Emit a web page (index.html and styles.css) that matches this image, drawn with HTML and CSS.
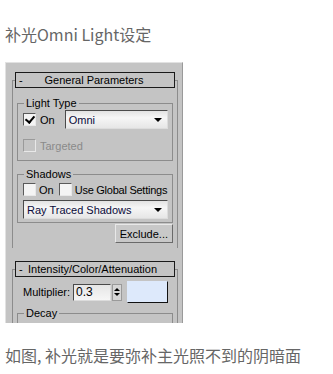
FILE: index.html
```html
<!DOCTYPE html>
<html lang="zh">
<head>
  <meta charset="UTF-8">
  <title>补光Omni Light设定</title>
  <link rel="stylesheet" href="styles.css">
</head>
<body>

  <p class="caption">补光Omni Light设定</p>

  <div class="panel">
    <div class="rollout">
      <div class="rollout-head"><span class="minus">-</span><span class="head-title">General Parameters</span></div>

      <fieldset class="group">
        <legend>Light Type</legend>
        <div class="row">
          <span class="check checked"></span>
          <span class="label">On</span>
          <div class="dropdown wide"><span>Omni</span><span class="arrow"></span></div>
        </div>
        <div class="row disabled">
          <span class="check"></span>
          <span class="label">Targeted</span>
        </div>
      </fieldset>

      <fieldset class="group shadows">
        <legend>Shadows</legend>
        <div class="row tight">
          <span class="check"></span>
          <span class="label">On</span>
          <span class="check"></span>
          <span class="label narrow">Use Global Settings</span>
        </div>
        <div class="dropdown full"><span>Ray Traced Shadows</span><span class="arrow"></span></div>
      </fieldset>

      <div class="btn-row">
        <button class="btn">Exclude...</button>
      </div>
    </div>

    <div class="rollout second">
      <div class="rollout-head left"><span class="minus">-</span><span>Intensity/Color/Attenuation</span></div>
      <div class="mult-row">
        <span class="label">Multiplier:</span>
        <div class="spinner-field">0.3</div>
        <div class="spinner"><span class="up"></span><span class="down"></span></div>
        <div class="swatch"></div>
      </div>
      <fieldset class="group decay">
        <legend>Decay</legend>
      </fieldset>
    </div>
  </div>

  <p class="caption bottom">如图, 补光就是要弥补主光照不到的阴暗面</p>

</body>
</html>
```

FILE: styles.css
```css
* {
  box-sizing: border-box;
  margin: 0;
  padding: 0;
}

body {
  background: #fff;
  font-family: "Noto Sans CJK SC", "Noto Sans", sans-serif;
}

.caption {
  margin: 23px 0 0 5px;
  font-size: 16px;
  line-height: 22px;
  color: #666;
}

.caption.bottom {
  margin-top: 21px;
}

/* 3ds max панель */
.panel {
  margin: 17px 0 0 5px;
  width: 178px;
  height: 261px;
  overflow: hidden;
  background: #c4c4c4;
  border-left: 1px solid #e2e2e2;
  border-top: 1px solid #e2e2e2;
  border-right: 1px solid #9a9a9a;
  padding-top: 1px;
  font-family: "Liberation Sans", Arial, sans-serif;
  font-size: 11px;
  color: #000;
}

.rollout {
  margin: 16px 4px 0 6px;
  border: 1px solid #8c8c8c;
  border-bottom: none;
  padding: 0 3px 5px 3px;
}

.rollout.second {
  margin-top: 21px;
  padding-bottom: 0;
  border-top: 1px solid #8c8c8c;
}

.rollout-head {
  display: flex;
  align-items: center;
  height: 16px;
  margin: -9px -1px 0 -1px;
  border: 1px solid #1a1a1a;
  background: #c4c4c4;
  line-height: 14px;
}

.rollout-head .minus {
  width: 10px;
  padding-left: 3px;
}

.rollout-head .head-title {
  flex: 1;
  text-align: center;
  padding-right: 12px;
}

.rollout-head.left span:last-child {
  padding-left: 2px;
}

.group {
  min-width: 0;
  border: 1px solid #8c8c8c;
  margin: 9px 1px 0 1px;
  padding: 0 4px 5px 5px;
}

.group.shadows {
  margin-top: 7px;
  padding-bottom: 3px;
}

.group legend {
  padding: 0 2px;
  margin-left: 1px;
  line-height: 12px;
}

.row {
  display: flex;
  align-items: center;
  gap: 4px;
  height: 19px;
  margin-top: 1px;
  white-space: nowrap;
}

.row + .row {
  margin-top: 7px;
}

.row.tight {
  gap: 3px;
  height: 17px;
}

.check {
  flex: none;
  width: 13px;
  height: 13px;
  background: #f4f4f4;
  border: 1px solid;
  border-color: #5a5a5a #e8e8e8 #e8e8e8 #5a5a5a;
  position: relative;
}

.check.checked::after {
  content: "";
  position: absolute;
  left: 3px;
  top: 0px;
  width: 4px;
  height: 7px;
  border: solid #000;
  border-width: 0 2px 2px 0;
  transform: rotate(40deg);
}

.label {
  margin-right: 4px;
}

.row.tight .label {
  margin-right: 2px;
}

.label.narrow {
  letter-spacing: -0.25px;
}

.disabled .check {
  background: #c4c4c4;
  border-color: #9a9a9a #e8e8e8 #e8e8e8 #9a9a9a;
}

.disabled .label {
  color: #8a8a8a;
}

.dropdown {
  display: flex;
  align-items: center;
  justify-content: space-between;
  height: 19px;
  padding: 0 5px 0 3px;
  background: linear-gradient(#e2e2e2, #f6f6f6 40%, #e6e6e6);
  border: 1px solid;
  border-color: #4a4a4a #dcdcdc #dcdcdc #4a4a4a;
  color: #0a0a3a;
}

.dropdown.wide {
  flex: 1;
  margin-left: 2px;
}

.dropdown.full {
  margin-top: 2px;
}

.arrow {
  width: 0;
  height: 0;
  border-left: 4px solid transparent;
  border-right: 4px solid transparent;
  border-top: 4px solid #000;
}

.btn-row {
  display: flex;
  justify-content: flex-end;
  padding: 1px 1px 0 0;
}

.btn {
  font: inherit;
  color: #000;
  height: 19px;
  padding: 0 4px;
  background: #c8c8c8;
  border: 1px solid;
  border-color: #e8e8e8 #6a6a6a #6a6a6a #e8e8e8;
}

.mult-row {
  display: flex;
  align-items: center;
  margin: 4px 0 0 7px;
}

.mult-row .label {
  margin-right: 3px;
}

.spinner-field {
  width: 38px;
  height: 17px;
  padding-left: 2px;
  line-height: 15px;
  font-size: 12px;
  background: linear-gradient(#e6e6e6, #f6f6f6);
  border: 1px solid;
  border-color: #4a4a4a #dcdcdc #dcdcdc #4a4a4a;
}

.spinner {
  display: flex;
  flex-direction: column;
  justify-content: center;
  align-items: center;
  gap: 2px;
  width: 10px;
  height: 17px;
  margin-left: 1px;
  background: #d6d6d6;
  border: 1px solid #9a9a9a;
}

.spinner .up {
  border-left: 3px solid transparent;
  border-right: 3px solid transparent;
  border-bottom: 3px solid #000;
}

.spinner .down {
  border-left: 3px solid transparent;
  border-right: 3px solid transparent;
  border-top: 3px solid #000;
}

.swatch {
  width: 41px;
  height: 22px;
  margin-left: 5px;
  background: #dde9fb;
  border: 1px solid;
  border-color: #dde9fb #111 #111 #dde9fb;
}

.group.decay {
  margin-top: 4px;
  height: 30px;
}
```
